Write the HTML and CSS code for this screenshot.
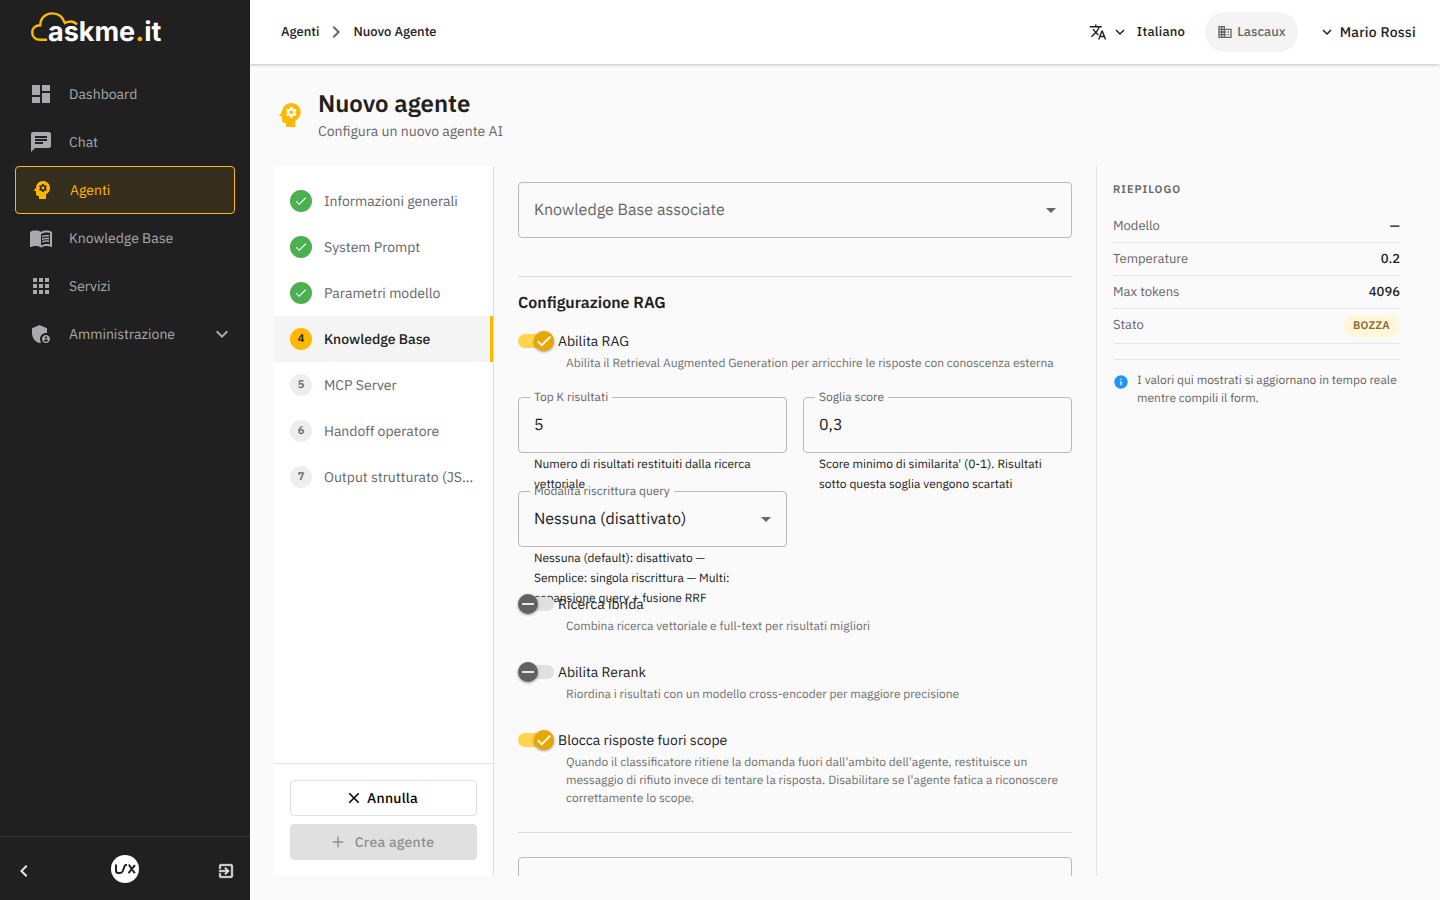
FILE: index.html
```html
<!DOCTYPE html>
<html lang="it">
<head>
<meta charset="utf-8">
<meta name="viewport" content="width=device-width, initial-scale=1">
<title>Nuovo agente - askme.it</title>
<link rel="stylesheet" href="styles.css">
</head>
<body>
<svg class="sprite" aria-hidden="true">
  <symbol id="i-dashboard" viewBox="0 0 24 24"><path d="M3 13h8V3H3v10zm0 8h8v-6H3v6zm10 0h8V11h-8v10zm0-18v6h8V3h-8z"/></symbol>
  <symbol id="i-chat" viewBox="0 0 24 24"><path d="M20 2H4c-1.1 0-1.99.9-1.99 2L2 22l4-4h14c1.1 0 2-.9 2-2V4c0-1.1-.9-2-2-2zM6 9h12v2H6V9zm8 5H6v-2h8v2zm4-6H6V6h12v2z"/></symbol>
  <symbol id="i-psychology" viewBox="0 0 24 24"><path d="M13 8.57c-.79 0-1.43.64-1.43 1.43s.64 1.43 1.43 1.43 1.43-.64 1.43-1.43-.64-1.43-1.43-1.43z"/><path d="M13 3C9.25 3 6.2 5.94 6.02 9.64L4.1 12.2c-.25.33-.01.8.4.8H6v3c0 1.1.9 2 2 2h1v3h7v-4.68c2.36-1.12 4-3.53 4-6.32 0-3.87-3.13-7-7-7zm3 7c0 .13-.01.26-.02.39l.83.66c.08.06.1.16.05.25l-.8 1.39c-.05.09-.16.12-.24.09l-.99-.4c-.21.16-.43.29-.67.39L14 13.83c-.01.1-.1.17-.2.17h-1.6c-.1 0-.18-.07-.2-.17l-.15-1.06c-.25-.1-.47-.23-.68-.39l-.99.4c-.09.03-.2 0-.25-.09l-.8-1.39c-.05-.08-.03-.19.05-.25l.84-.66c-.01-.13-.02-.26-.02-.39s.02-.27.04-.39l-.85-.66c-.08-.06-.1-.16-.05-.26l.8-1.38c.05-.09.15-.12.24-.09l1 .4c.2-.15.43-.29.67-.39l.15-1.06c.02-.1.1-.17.2-.17h1.6c.1 0 .18.07.2.17l.15 1.06c.24.1.46.23.67.39l1-.4c.09-.03.2 0 .24.09l.8 1.38c.05.09.03.2-.05.26l-.85.66c.03.12.04.25.04.39z"/></symbol>
  <symbol id="i-book" viewBox="0 0 24 24"><path d="M21 5c-1.11-.35-2.33-.5-3.5-.5-1.95 0-4.05.4-5.5 1.5-1.45-1.1-3.55-1.5-5.5-1.5S2.45 4.9 1 6v14.65c0 .25.25.5.5.5.1 0 .15-.05.25-.05C3.1 20.45 5.05 20 6.5 20c1.95 0 4.05.4 5.5 1.5 1.35-.85 3.8-1.5 5.5-1.5 1.65 0 3.35.3 4.75 1.05.1.05.15.05.25.05.25 0 .5-.25.5-.5V6c-.6-.45-1.25-.75-2-1zm0 13.5c-1.1-.35-2.3-.5-3.5-.5-1.7 0-4.15.65-5.5 1.5V8c1.35-.85 3.8-1.5 5.5-1.5 1.2 0 2.4.15 3.5.5v11.5z"/><path d="M17.5 10.5c.88 0 1.73.09 2.5.26V9.24c-.79-.15-1.64-.24-2.5-.24-1.7 0-3.24.29-4.5.83v1.66c1.13-.64 2.7-.99 4.5-.99zM13 12.49v1.66c1.13-.64 2.7-.99 4.5-.99.88 0 1.73.09 2.5.26V11.9c-.79-.15-1.64-.24-2.5-.24-1.7 0-3.24.3-4.5.83zM17.5 14.33c-1.7 0-3.24.29-4.5.83v1.66c1.13-.64 2.7-.99 4.5-.99.88 0 1.73.09 2.5.26v-1.52c-.79-.16-1.64-.24-2.5-.24z"/></symbol>
  <symbol id="i-apps" viewBox="0 0 24 24"><path d="M4 8h4V4H4v4zm6 12h4v-4h-4v4zm-6 0h4v-4H4v4zm0-6h4v-4H4v4zm6 0h4v-4h-4v4zm6-10v4h4V4h-4zm-6 4h4V4h-4v4zm6 6h4v-4h-4v4zm0 6h4v-4h-4v4z"/></symbol>
  <symbol id="i-admin" viewBox="0 0 24 24"><path d="M17 11c.34 0 .67.04 1 .09V6.27L10.5 3 3 6.27v4.91c0 4.54 3.2 8.79 7.5 9.82.55-.13 1.08-.32 1.6-.55-.69-.98-1.1-2.17-1.1-3.45 0-3.31 2.69-6 6-6z"/><path d="M17 13c-2.21 0-4 1.79-4 4s1.79 4 4 4 4-1.79 4-4-1.79-4-4-4zm0 1.38c.62 0 1.12.51 1.12 1.12s-.51 1.12-1.12 1.12-1.12-.51-1.12-1.12.5-1.12 1.12-1.12zm0 5.37c-.93 0-1.74-.46-2.24-1.17.05-.72 1.51-1.08 2.24-1.08s2.19.36 2.24 1.08c-.5.71-1.31 1.17-2.24 1.17z"/></symbol>
  <symbol id="i-down" viewBox="0 0 24 24"><path d="M16.59 8.59L12 13.17 7.41 8.59 6 10l6 6 6-6z"/></symbol>
  <symbol id="i-left" viewBox="0 0 24 24"><path d="M15.41 7.41L14 6l-6 6 6 6 1.41-1.41L10.83 12z"/></symbol>
  <symbol id="i-right" viewBox="0 0 24 24"><path d="M10 6L8.59 7.41 13.17 12l-4.58 4.59L10 18l6-6z"/></symbol>
  <symbol id="i-exit" viewBox="0 0 24 24"><path d="M10.09 15.59L11.5 17l5-5-5-5-1.41 1.41L12.67 11H3v2h9.67l-2.58 2.59zM19 3H5c-1.11 0-2 .9-2 2v4h2V5h14v14H5v-4H3v4c0 1.1.89 2 2 2h14c1.1 0 2-.9 2-2V5c0-1.1-.9-2-2-2z"/></symbol>
  <symbol id="i-translate" viewBox="0 0 24 24"><path d="M12.87 15.07l-2.54-2.51.03-.03c1.74-1.94 2.98-4.17 3.71-6.53H17V4h-7V2H8v2H1v1.99h11.17C11.5 7.92 10.44 9.75 9 11.35 8.07 10.32 7.3 9.19 6.69 8h-2c.73 1.63 1.73 3.17 2.98 4.56l-5.09 5.02L4 19l5-5 3.11 3.11.76-2.04zM18.5 10h-2L12 22h2l1.12-3h4.75L21 22h2l-4.5-12zm-2.62 7l1.62-4.33L19.12 17h-3.24z"/></symbol>
  <symbol id="i-business" viewBox="0 0 24 24"><path d="M12 7V3H2v18h20V7H12zM6 19H4v-2h2v2zm0-4H4v-2h2v2zm0-4H4V9h2v2zm0-4H4V5h2v2zm4 12H8v-2h2v2zm0-4H8v-2h2v2zm0-4H8V9h2v2zm0-4H8V5h2v2zm10 12h-8v-2h2v-2h-2v-2h2v-2h-2V9h8v10zm-2-8h-2v2h2v-2zm0 4h-2v2h2v-2z"/></symbol>
  <symbol id="i-check" viewBox="0 0 24 24"><path d="M9 16.17L4.83 12l-1.42 1.41L9 19 21 7l-1.41-1.41z"/></symbol>
  <symbol id="i-close" viewBox="0 0 24 24"><path d="M19 6.41L17.59 5 12 10.59 6.41 5 5 6.41 10.59 12 5 17.59 6.41 19 12 13.41 17.59 19 19 17.59 13.41 12z"/></symbol>
  <symbol id="i-add" viewBox="0 0 24 24"><path d="M19 13h-6v6h-2v-6H5v-2h6V5h2v6h6v2z"/></symbol>
  <symbol id="i-minus" viewBox="0 0 24 24"><path d="M4 10.670h16v2.660H4z"/></symbol>
  <symbol id="i-info" viewBox="0 0 24 24"><path d="M12 2C6.48 2 2 6.48 2 12s4.48 10 10 10 10-4.48 10-10S17.52 2 12 2zm1 15h-2v-6h2v6zm0-8h-2V7h2v2z"/></symbol>
</svg>

<div class="app">
  <aside class="sidebar">
    <a class="brand" href="#" aria-label="askme.it">
      <svg class="brand-logo" viewBox="0 0 136 34" aria-hidden="true">
        <path class="brand-cloud" d="M17 28.800H10.500C5 28.800 2.200 25.500 2.200 21.300C2.200 17 5.500 14.200 10.300 14.200C10.300 7 15.500 2.400 22 2.400C28.500 2.400 33 6.500 34.800 12C39 10 44 10 47 13.500"/>
        <text class="brand-text" x="18" y="30">askme<tspan class="brand-dot">.</tspan>it</text>
      </svg>
    </a>
    <nav class="nav" aria-label="Principale">
      <a class="nav-item" href="#"><svg class="icon"><use href="#i-dashboard"/></svg><span>Dashboard</span></a>
      <a class="nav-item" href="#"><svg class="icon"><use href="#i-chat"/></svg><span>Chat</span></a>
      <a class="nav-item nav-item-active" href="#" aria-current="page"><svg class="icon"><use href="#i-psychology"/></svg><span>Agenti</span></a>
      <a class="nav-item" href="#"><svg class="icon"><use href="#i-book"/></svg><span>Knowledge Base</span></a>
      <a class="nav-item" href="#"><svg class="icon"><use href="#i-apps"/></svg><span>Servizi</span></a>
      <a class="nav-item" href="#"><svg class="icon"><use href="#i-admin"/></svg><span>Amministrazione</span><svg class="icon nav-arrow"><use href="#i-down"/></svg></a>
    </nav>
    <div class="sidebar-foot">
      <button class="icon-button" type="button" aria-label="Comprimi menu"><svg class="icon"><use href="#i-left"/></svg></button>
      <svg class="foot-logo" viewBox="0 0 28 28" role="img" aria-label="Lascaux">
        <circle cx="14" cy="14" r="14"/>
        <path d="M5 9.500V15.500Q5 18 7.500 18H9Q11 18 11.800 16L13.400 11.500Q14.100 9.800 16 9.800M17.500 10.200H18.200L23.800 18.200M24 10.200L17.500 18.200"/>
      </svg>
      <button class="icon-button" type="button" aria-label="Esci"><svg class="icon icon-18 icon-bold"><use href="#i-exit"/></svg></button>
    </div>
  </aside>

  <div class="page">
    <header class="topbar">
      <nav class="crumbs" aria-label="Percorso">
        <a href="#">Agenti</a>
        <svg class="icon icon-muted"><use href="#i-right"/></svg>
        <span>Nuovo Agente</span>
      </nav>
      <div class="top-actions">
        <button class="top-button" type="button"><svg class="icon icon-18"><use href="#i-translate"/></svg><svg class="icon icon-18"><use href="#i-down"/></svg><span class="language">Italiano</span></button>
        <button class="tenant" type="button"><svg class="icon icon-16"><use href="#i-business"/></svg>Lascaux</button>
        <button class="top-button" type="button"><svg class="icon icon-18"><use href="#i-down"/></svg>Mario Rossi</button>
      </div>
    </header>

    <main class="content">
      <div class="page-title">
        <svg class="icon icon-32"><use href="#i-psychology"/></svg>
        <div>
          <h1>Nuovo agente</h1>
          <p>Configura un nuovo agente AI</p>
        </div>
      </div>

      <div class="wizard">
        <section class="steps">
          <ol class="step-list">
            <li><button class="step" type="button"><span class="badge badge-done"><svg class="icon icon-14"><use href="#i-check"/></svg></span><span class="step-name">Informazioni generali</span></button></li>
            <li><button class="step" type="button"><span class="badge badge-done"><svg class="icon icon-14"><use href="#i-check"/></svg></span><span class="step-name">System Prompt</span></button></li>
            <li><button class="step" type="button"><span class="badge badge-done"><svg class="icon icon-14"><use href="#i-check"/></svg></span><span class="step-name">Parametri modello</span></button></li>
            <li><button class="step step-active" type="button" aria-current="step"><span class="badge badge-current">4</span><span class="step-name">Knowledge Base</span></button></li>
            <li><button class="step" type="button"><span class="badge">5</span><span class="step-name">MCP Server</span></button></li>
            <li><button class="step" type="button"><span class="badge">6</span><span class="step-name">Handoff operatore</span></button></li>
            <li><button class="step" type="button"><span class="badge">7</span><span class="step-name">Output strutturato (JSON)</span></button></li>
          </ol>
          <div class="step-actions">
            <button class="button" type="button"><svg class="icon icon-18"><use href="#i-close"/></svg>Annulla</button>
            <button class="button button-create" type="button" disabled><svg class="icon icon-18"><use href="#i-add"/></svg>Crea agente</button>
          </div>
        </section>

        <form class="form">
          <div class="outline">
            <select class="control control-empty" aria-label="Knowledge Base associate"><option>Knowledge Base associate</option></select>
          </div>
          <section class="group">
            <h2>Configurazione RAG</h2>
            <div class="toggle">
              <label class="toggle-row"><span class="switch"><input type="checkbox" checked><svg class="icon icon-18 icon-bold"><use href="#i-check"/></svg></span>Abilita RAG</label>
              <p>Abilita il Retrieval Augmented Generation per arricchire le risposte con conoscenza esterna</p>
            </div>
            <div class="fields">
              <div class="field">
                <fieldset class="outline"><legend><label for="topk">Top K risultati</label></legend><input class="control" id="topk" type="text" value="5"></fieldset>
                <p class="hint">Numero di risultati restituiti dalla ricerca vettoriale</p>
              </div>
              <div class="field">
                <fieldset class="outline"><legend><label for="score">Soglia score</label></legend><input class="control" id="score" type="text" value="0,3"></fieldset>
                <p class="hint">Score minimo di similarita' (0-1). Risultati sotto questa soglia vengono scartati</p>
              </div>
              <div class="field">
                <fieldset class="outline"><legend><label for="rewrite">Modalità riscrittura query</label></legend><select class="control" id="rewrite"><option>Nessuna (disattivato)</option></select></fieldset>
                <p class="hint">Nessuna (default): disattivato — Semplice: singola riscrittura — Multi: espansione query + fusione RRF</p>
              </div>
            </div>
            <div class="toggles">
              <div class="toggle">
                <label class="toggle-row"><span class="switch"><input type="checkbox"><svg class="icon icon-18"><use href="#i-minus"/></svg></span>Ricerca ibrida</label>
                <p>Combina ricerca vettoriale e full-text per risultati migliori</p>
              </div>
              <div class="toggle">
                <label class="toggle-row"><span class="switch"><input type="checkbox"><svg class="icon icon-18"><use href="#i-minus"/></svg></span>Abilita Rerank</label>
                <p>Riordina i risultati con un modello cross-encoder per maggiore precisione</p>
              </div>
              <div class="toggle">
                <label class="toggle-row"><span class="switch"><input type="checkbox" checked><svg class="icon icon-18 icon-bold"><use href="#i-check"/></svg></span>Blocca risposte fuori scope</label>
                <p>Quando il classificatore ritiene la domanda fuori dall'ambito dell'agente, restituisce un messaggio di rifiuto invece di tentare la risposta. Disabilitare se l'agente fatica a riconoscere correttamente lo scope.</p>
              </div>
            </div>
          </section>
          <section class="group-last">
            <div class="outline"><textarea class="control control-area" aria-label="Messaggio di rifiuto"></textarea></div>
          </section>
        </form>

        <aside class="summary">
          <h2>Riepilogo</h2>
          <dl>
            <div class="summary-row"><dt>Modello</dt><dd>—</dd></div>
            <div class="summary-row"><dt>Temperature</dt><dd>0.2</dd></div>
            <div class="summary-row"><dt>Max tokens</dt><dd>4096</dd></div>
            <div class="summary-row"><dt>Stato</dt><dd><span class="chip">BOZZA</span></dd></div>
          </dl>
          <div class="note"><svg class="icon icon-16"><use href="#i-info"/></svg><p>I valori qui mostrati si aggiornano in tempo reale mentre compili il form.</p></div>
        </aside>
      </div>
    </main>
  </div>
</div>
</body>
</html>
```
FILE: styles.css
```css
*, *::before, *::after { box-sizing: border-box; }

body {
  margin: 0;
  font-family: "IBM Plex Sans", Roboto, "Noto Sans", sans-serif;
  font-size: 14px;
  line-height: 20px;
  text-rendering: geometricPrecision;
  color: #212121;
  background: #fafafa;
}

h1, h2, p, dl, dd, ol { margin: 0; padding: 0; }
ol { list-style: none; }
a { color: inherit; text-decoration: none; }

button, input, select, textarea {
  font: inherit;
  color: inherit;
  text-rendering: inherit;
}

button {
  padding: 0;
  border: 0;
  background: none;
  cursor: pointer;
}

.sprite { position: absolute; width: 0; height: 0; }

.icon {
  flex: none;
  display: block;
  width: 24px;
  height: 24px;
  fill: currentColor;
}
.icon-14 { width: 14px; height: 14px; }
.icon-16 { width: 16px; height: 16px; }
.icon-18 { width: 18px; height: 18px; }
.icon-32 { width: 32px; height: 32px; }
.icon-muted { color: #666; }
.icon-bold { stroke: currentColor; stroke-width: 0.7; }

.app {
  display: grid;
  grid-template-columns: 250px minmax(0, 1fr);
  height: 100vh;
}

/* Sidebar */
.sidebar {
  display: flex;
  flex-direction: column;
  background: #202020;
  color: #a9a9ae;
}
.brand {
  display: block;
  height: 70px;
  padding: 11px 30px 0;
}
.brand-logo {
  display: block;
  width: 136px;
  height: 34px;
  overflow: visible;
}
.brand-cloud {
  fill: none;
  stroke: #ffb800;
  stroke-width: 2.4;
}
.brand-text {
  font-family: Inter, sans-serif;
  font-size: 27px;
  font-weight: 700;
  fill: #fff;
}
.brand-dot { fill: #ffb800; }

.nav {
  flex: 1;
  padding: 0 15px;
}
.nav-item {
  display: flex;
  align-items: center;
  gap: 16px;
  height: 48px;
  padding: 0 1px 0 14px;
}
.nav-item-active {
  border: 1px solid #ffb800;
  border-radius: 4px;
  background: #362e1d;
  color: #ffb800;
}
.nav-arrow { margin-left: auto; }

.sidebar-foot {
  display: flex;
  align-items: center;
  justify-content: space-between;
  height: 64px;
  padding: 4px 10px 0;
  border-top: 1px solid #353535;
  color: #e8e8e8;
}
.icon-button {
  display: grid;
  place-items: center;
  width: 28px;
  height: 28px;
}
.foot-logo {
  width: 28px;
  height: 28px;
  margin-bottom: 4px;
  fill: #fff;
}
.foot-logo path {
  fill: none;
  stroke: #202020;
  stroke-width: 2;
}

/* Top bar */
.page {
  display: flex;
  flex-direction: column;
  min-width: 0;
  min-height: 0;
}
.topbar {
  display: flex;
  align-items: center;
  justify-content: space-between;
  flex: none;
  height: 64px;
  padding: 0 24px 0 31px;
  background: #fff;
  box-shadow: 0 1px 3px rgba(0, 0, 0, .22);
  font-weight: 500;
}
.crumbs {
  display: flex;
  align-items: center;
  gap: 5px;
  font-size: 13px;
}
.top-actions {
  display: flex;
  align-items: center;
  gap: 20px;
}
.top-button {
  display: flex;
  align-items: center;
  gap: 4px;
  font-weight: 500;
  letter-spacing: 0.25px;
}
.language {
  padding-left: 4px;
  font-size: 13px;
}
.tenant {
  display: flex;
  align-items: center;
  gap: 4px;
  height: 40px;
  padding: 0 12px;
  border-radius: 20px;
  background: #f4f4f4;
  color: #666;
  font-size: 13px;
}

/* Content */
.content {
  display: flex;
  flex-direction: column;
  flex: 1;
  min-height: 0;
  padding: 24px;
}
.page-title {
  display: flex;
  align-items: center;
  gap: 12px;
  padding-bottom: 24px;
}
.page-title .icon { color: #ffb800; }
.page-title h1 {
  font-size: 24px;
  font-weight: 600;
  line-height: 30px;
}
.page-title p {
  padding-top: 3px;
  color: #666;
}
.page-title div { height: 54px; }

.wizard {
  display: grid;
  grid-template-columns: 220px minmax(0, 1fr) 320px;
  flex: 1;
  min-height: 0;
}

.steps {
  display: flex;
  flex-direction: column;
  min-height: 0;
  border-right: 1px solid #e0e0e0;
  background: #fff;
}
.step-list {
  flex: 1;
  padding-top: 12px;
}
.step {
  display: flex;
  align-items: center;
  gap: 12px;
  width: 100%;
  height: 46px;
  padding: 0 16px;
  border-right: 3px solid transparent;
  color: #666;
  text-align: left;
}
.step-active {
  border-right-color: #ffb800;
  background: #f4f4f4;
  color: #212121;
  font-weight: 500;
}
.step-name {
  overflow: hidden;
  text-overflow: ellipsis;
  white-space: nowrap;
}
.badge {
  display: grid;
  place-items: center;
  flex: none;
  width: 22px;
  height: 22px;
  border-radius: 50%;
  background: #eee;
  font-size: 11px;
  font-weight: 600;
}
.badge-done { background: #4caf50; color: #fff; }
.badge-current { background: #ffb800; }

.step-actions {
  display: grid;
  gap: 8px;
  padding: 16px;
  border-top: 1px solid #e0e0e0;
}
.button {
  display: flex;
  align-items: center;
  justify-content: center;
  gap: 4px;
  height: 36px;
  padding-right: 4px;
  border: 1px solid #e0e0e0;
  border-radius: 4px;
  background: #fff;
  color: #000;
  font-weight: 500;
  letter-spacing: 0.25px;
}
.button-create {
  gap: 8px;
  background: #e0e0e0;
  color: #8f8f8f;
}

/* Form */
.form {
  min-height: 0;
  padding: 16px 24px 0;
  overflow-y: auto;
  scrollbar-width: none;
}
.outline {
  min-width: 0;
  height: 56px;
  margin: 0;
  padding: 0;
  border: 1px solid #b9b9b9;
  border-radius: 4px;
}
.outline legend {
  height: 1px;
  margin-left: 11px;
  padding: 0 4px;
  font-size: 12px;
  line-height: 1px;
  color: #666;
}
.control {
  display: block;
  width: 100%;
  height: 54px;
  padding: 0 15px;
  border: 0;
  outline: 0;
  background: transparent;
  font-size: 16px;
  line-height: 24px;
}
select.control {
  appearance: none;
  background: url("data:image/svg+xml,%3Csvg xmlns='http://www.w3.org/2000/svg' width='10' height='5'%3E%3Cpath d='M0 0h10L5 5z' fill='%23666'/%3E%3C/svg%3E") right 15px center no-repeat;
}
.control-empty { color: #666; }
.control-area { resize: none; }

.group {
  margin-top: 38px;
  padding: 14px 0 24px;
  border-top: 1px solid #dcdcdc;
  border-bottom: 1px solid #dcdcdc;
}
.group h2 {
  margin-bottom: 12px;
  font-size: 16px;
  font-weight: 600;
  line-height: 24px;
}
.group-last { padding-top: 24px; }

.toggle-row {
  display: flex;
  align-items: center;
  gap: 4px;
  width: fit-content;
  height: 28px;
}
.toggle p {
  padding-left: 48px;
  font-size: 12px;
  line-height: 18px;
  color: #707070;
}
.switch {
  position: relative;
  display: block;
  width: 36px;
  height: 20px;
}
.switch input {
  appearance: none;
  display: flex;
  align-items: center;
  width: 36px;
  height: 20px;
  margin: 0;
}
.switch input::before {
  content: "";
  width: 36px;
  height: 14px;
  border-radius: 7px;
  background: #e0e0e0;
}
.switch input::after {
  content: "";
  position: absolute;
  left: 0;
  width: 20px;
  height: 20px;
  border-radius: 50%;
  background: #616161;
  box-shadow: 0 1px 3px rgba(0, 0, 0, .4);
}
.switch .icon {
  position: absolute;
  top: 1px;
  left: 1px;
  color: #e8e8e8;
}
.switch input:checked::before { background: #ffd54f; }
.switch input:checked::after { left: 16px; background: #e6a700; }
.switch input:checked + .icon { left: 17px; color: #fff; }

.fields {
  display: grid;
  grid-template-columns: repeat(2, minmax(0, 1fr));
  gap: 16px;
  margin: 24px 0 21px;
}
.field { height: 78px; }
.hint {
  padding: 2px 28px 0 16px;
  font-size: 12px;
  line-height: 20px;
}
.toggles {
  display: grid;
  gap: 22px;
}

/* Summary */
.summary {
  padding: 16px;
  border-left: 1px solid #e6e6e6;
}
.summary h2 {
  margin-bottom: 12px;
  font-size: 11px;
  font-weight: 600;
  line-height: 16px;
  letter-spacing: 1px;
  text-transform: uppercase;
  color: #666;
}
.summary-row {
  display: flex;
  justify-content: space-between;
  padding: 6px 0;
  border-bottom: 1px solid #e6e6e6;
  font-size: 13px;
}
.summary-row dt { color: #666; }
.summary-row dd { font-weight: 500; }
.chip {
  display: block;
  padding: 0 10px;
  border-radius: 11px;
  background: #fff6dc;
  color: #8a6d2f;
  font-size: 11px;
  font-weight: 600;
  line-height: 22px;
  letter-spacing: 0.3px;
}
.note {
  display: flex;
  gap: 8px;
  margin-top: 15px;
  padding-top: 12px;
  border-top: 1px solid #e6e6e6;
  font-size: 12px;
  line-height: 18px;
  color: #666;
}
.note .icon { margin-top: 2px; color: #2196f3; }
```
